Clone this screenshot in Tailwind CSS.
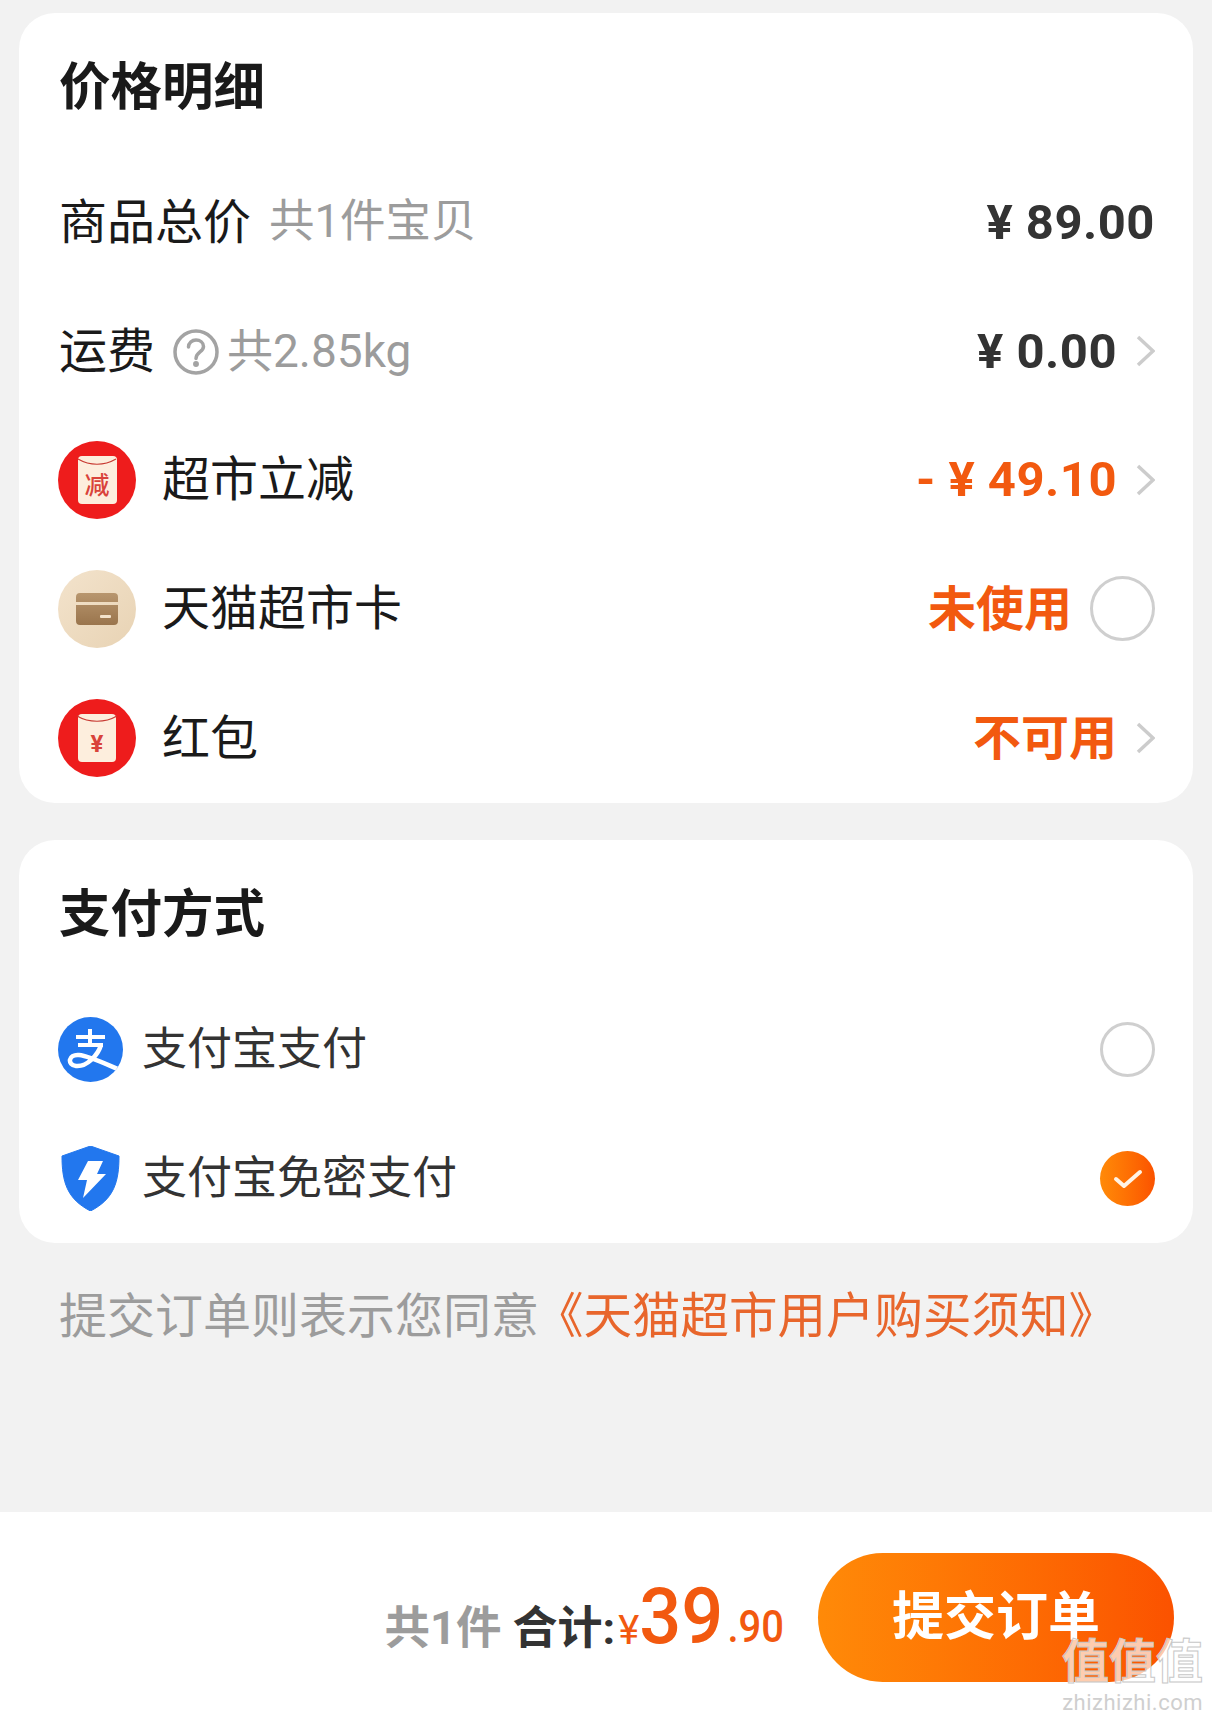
<!DOCTYPE html>
<html lang="zh-CN">
<head>
  <meta charset="UTF-8" />
  <meta name="viewport" content="width=device-width, initial-scale=1.0"/>
  <title>确认订单</title>
  <script src="https://cdn.jsdelivr.net/npm/@tailwindcss/browser@4"></script>
</head>
<body class="bg-[#f2f2f2] w-[1212px] h-[1720px] overflow-hidden relative flex flex-col font-[Roboto,'Noto_Sans_CJK_SC',sans-serif] text-[#1a1a1a]">

  <main class="flex-1 px-[19px] pt-[13px]">

    <!-- Price details -->
    <section class="bg-white rounded-[36px] pl-[40px] pr-[38px]">
      <h2 class="h-[145px] pt-[4px] flex items-center text-[51.5px] font-bold">价格明细</h2>

      <div class="h-[129px] flex items-center justify-between">
        <div class="flex items-center gap-[18px]">
          <span class="text-[48px]">商品总价</span>
          <span class="text-[45.5px] text-[#9c9c9c]">共1件宝贝</span>
        </div>
        <span class="text-[49px] font-bold text-[#333] tracking-[0.5px]">¥ 89.00</span>
      </div>

      <div class="h-[129px] flex items-center justify-between">
        <div class="flex items-center">
          <span class="text-[48px]">运费</span>
          <svg class="ml-[18px] mr-[8px] w-[46px] h-[46px]" viewBox="0 0 46 46" fill="none" stroke="#a3a3a3" stroke-width="3.500">
            <circle cx="23" cy="23" r="21" />
            <path d="M15.500 18c0-4 3.500-7 7.500-7s7.500 2.500 7.500 6.500c0 5.500-7.500 5.500-7.500 12" stroke-linecap="round" />
            <circle cx="23" cy="35" r="1.200" fill="#a3a3a3" />
          </svg>
          <span class="text-[46px] text-[#9c9c9c]">共2.85kg</span>
        </div>
        <div class="flex items-center gap-[19px]">
          <span class="text-[49px] font-bold text-[#333] tracking-[0.5px]">¥ 0.00</span>
          <svg class="w-[19px] h-[32px] -mt-[2px]" viewBox="0 0 19 32" fill="none" stroke="#cccccc" stroke-width="3.500"><path d="M2 2l15 14L2 30" /></svg>
        </div>
      </div>

      <div class="h-[129px] flex items-center justify-between">
        <div class="flex items-center gap-[26px] -ml-[1px]">
          <div class="-mt-[2px] w-[78px] h-[78px] rounded-full bg-[#ee1c1c] relative flex items-center justify-center">
            <div class="w-[39px] h-[48px] rounded-[4px] bg-[#fdeedd] flex items-end justify-center">
              <span class="text-[25px] leading-[36px] font-medium text-[#d9433a]">减</span>
            </div>
            <svg class="absolute left-[19px] top-[15px] w-[40px] h-[12px]" viewBox="0 0 40 12" fill="none" stroke="#c83a32" stroke-width="1.200"><path d="M1 3c12 7 26 7 38 0" /></svg>
          </div>
          <span class="text-[48px] -mt-[2px]">超市立减</span>
        </div>
        <div class="flex items-center gap-[19px]">
          <span class="text-[49px] font-bold text-[#f2590f] tracking-[0.5px] -mt-[2px]">- ¥ 49.10</span>
          <svg class="w-[19px] h-[32px] -mt-[2px]" viewBox="0 0 19 32" fill="none" stroke="#cccccc" stroke-width="3.500"><path d="M2 2l15 14L2 30" /></svg>
        </div>
      </div>

      <div class="h-[129px] flex items-center justify-between">
        <div class="flex items-center gap-[26px] -ml-[1px]">
          <div class="-mt-[2px] w-[78px] h-[78px] rounded-full bg-gradient-to-br from-[#f3e3cc] to-[#e8d3b4] flex items-center justify-center">
            <svg class="w-[42px] h-[32px]" viewBox="0 0 42 32">
              <defs><linearGradient id="cardFill" x1="0" y1="0" x2="0" y2="1"><stop offset="0" stop-color="#b8966e" /><stop offset="1" stop-color="#9a754d" /></linearGradient></defs>
              <path d="M4 0h34a4 4 0 0 1 4 4v5H0V4a4 4 0 0 1 4-4zM0 12h42v16a4 4 0 0 1-4 4H4a4 4 0 0 1-4-4z" fill="url(#cardFill)" />
              <rect x="24" y="22" width="11" height="3" rx="1" fill="#f3e3cc" />
            </svg>
          </div>
          <span class="text-[48px] -mt-[1px]">天猫超市卡</span>
        </div>
        <div class="flex items-center gap-[18px]">
          <span class="text-[48px] font-bold text-[#f2590f]">未使用</span>
          <div class="-mt-[2px] w-[65px] h-[65px] rounded-full border-[3px] border-[#cfcfcf]"></div>
        </div>
      </div>

      <div class="h-[129px] flex items-center justify-between">
        <div class="flex items-center gap-[26px] -ml-[1px]">
          <div class="-mt-[2px] w-[78px] h-[78px] rounded-full bg-[#ee1c1c] relative flex items-center justify-center">
            <div class="w-[38px] h-[48px] rounded-[4px] bg-[#fdeedd] flex items-end justify-center">
              <span class="text-[24px] leading-[36px] font-bold text-[#d9433a]">¥</span>
            </div>
            <svg class="absolute left-[18px] top-[14px] w-[42px] h-[12px]" viewBox="0 0 42 12" fill="none" stroke="#c83a32" stroke-width="1.200"><path d="M1 3c12 7 28 7 40 0" /></svg>
          </div>
          <span class="text-[48px]">红包</span>
        </div>
        <div class="flex items-center gap-[19px]">
          <span class="text-[48px] font-bold text-[#f2590f]">不可用</span>
          <svg class="w-[19px] h-[32px] -mt-[2px]" viewBox="0 0 19 32" fill="none" stroke="#cccccc" stroke-width="3.500"><path d="M2 2l15 14L2 30" /></svg>
        </div>
      </div>
    </section>

    <!-- Payment -->
    <section class="mt-[37px] bg-white rounded-[36px] pl-[40px] pr-[38px]">
      <h2 class="h-[145px] pt-[4px] flex items-center text-[51.5px] font-bold">支付方式</h2>

      <div class="h-[129px] flex items-center justify-between">
        <div class="flex items-center gap-[19px] -ml-[1px]">
          <svg class="w-[65px] h-[65px]" viewBox="0 0 65 65">
            <defs><clipPath id="alipayClip"><circle cx="32.500" cy="32.500" r="32.500" /></clipPath></defs>
            <circle cx="32.500" cy="32.500" r="32.500" fill="#2277ee" />
            <g clip-path="url(#alipayClip)" fill="none" stroke="#fff">
              <path d="M18 20h29M32 12v16M20 28h25" stroke-width="4" />
              <path d="M43 28C40 38 29 50 18 49 9 48 10 37 21 38c11 1 24 8 48 18" stroke-width="4.500" />
            </g>
          </svg>
          <span class="text-[45px] text-[#333]">支付宝支付</span>
        </div>
        <div class="w-[55px] h-[55px] rounded-full border-[3px] border-[#cfcfcf]"></div>
      </div>

      <div class="h-[129px] flex items-center justify-between">
        <div class="flex items-center gap-[19px] -ml-[1px]">
          <svg class="w-[65px] h-[65px]" viewBox="0 0 65 65">
            <path d="M32.500 0 61 10c0 26-5 43-28.500 55C9 53 4 36 4 10z" fill="#2277ee" stroke="#2277ee" stroke-linejoin="round" />
            <path d="M30 15h15l-6 13h9L25 52l4-18H20z" fill="#fff" />
          </svg>
          <span class="text-[45px] text-[#333]">支付宝免密支付</span>
        </div>
        <div class="w-[55px] h-[55px] rounded-full bg-gradient-to-r from-[#ff8a08] to-[#fb5200] flex items-center justify-center">
          <svg class="w-[30px] h-[22px]" viewBox="0 0 30 22" fill="none" stroke="#fff3e4" stroke-width="4" stroke-linecap="round" stroke-linejoin="round"><path d="M3 11l8 7L27 4" /></svg>
        </div>
      </div>
    </section>

    <p class="mt-[50px] pl-[40px] text-[48px] leading-[48px] whitespace-nowrap text-[#9c9c9c]">提交订单则表示您同意<span class="-ml-[4px] text-[48.5px] text-[#e8662c]">《天猫超市用户购买须知》</span></p>
  </main>

  <!-- Bottom bar -->
  <footer class="h-[208px] bg-white flex items-start justify-end pt-[41px] pr-[38px]">
    <div class="h-[129px] flex items-baseline font-bold pt-[29px]">
      <span class="text-[45.5px] text-[#9c9c9c]">共1件</span>
      <span class="ml-[11px] text-[45px] text-[#333]">合计:</span>
      <span class="ml-[3px] text-[40px] font-normal text-[#f2590f]">¥</span>
      <span class="text-[74px] leading-none font-medium text-[#f2590f] scale-y-[1.05] origin-bottom">39</span>
      <span class="ml-[4px] text-[40px] font-medium text-[#f2590f] scale-y-[1.12] origin-bottom">.90</span>
    </div>
    <button class="ml-[34px] w-[356px] h-[129px] rounded-full bg-gradient-to-r from-[#ff8a08] to-[#fb5200] text-white text-[52px] font-bold">提交订单</button>
  </footer>

  <!-- Watermark -->
  <div class="absolute right-[9px] bottom-[6px] flex flex-col items-end leading-none pointer-events-none">
    <span class="text-[47px] leading-[60px] font-bold text-white/70 [-webkit-text-stroke:1px_#c8c8c8]">值值值</span>
    <span class="text-[22px] tracking-[0.5px] text-[#cfcfcf]">zhizhizhi.com</span>
  </div>

</body>
</html>
